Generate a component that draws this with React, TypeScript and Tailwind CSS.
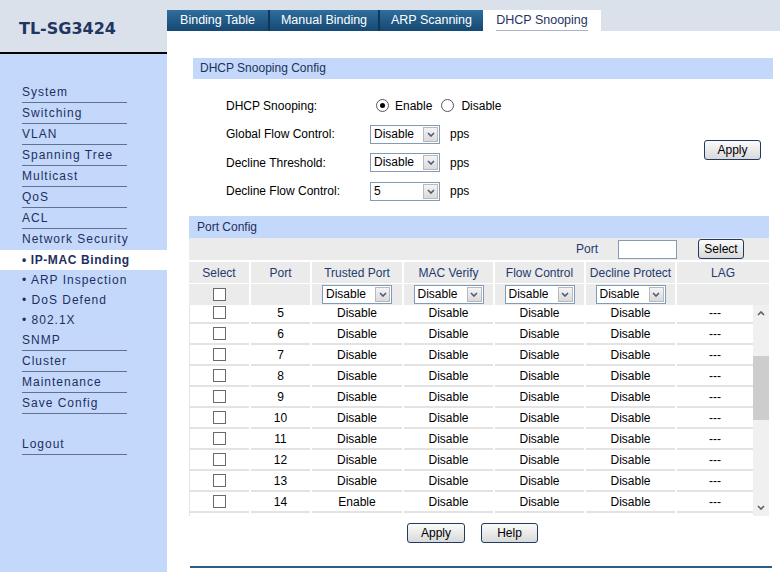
import React from "react";

const topMenu = ["System", "Switching", "VLAN", "Spanning Tree", "Multicast", "QoS", "ACL"];
const subMenu = ["ARP Inspection", "DoS Defend", "802.1X"];
const bottomMenu = ["SNMP", "Cluster", "Maintenance", "Save Config"];

const tabs = [
  { label: "Binding Table", w: "w-[101px]" },
  { label: "Manual Binding", w: "w-[110px]" },
  { label: "ARP Scanning", w: "w-[105px]" },
];

// ports 1-4 are scrolled out of view; row 15 only peeks in at the bottom
const rows = [5, 6, 7, 8, 9, 10, 11, 12, 13, 14];

const cols = "grid grid-cols-[60px_59px_90px_89px_89px_89px_1fr] gap-x-[2px]";
const cell = "flex items-center justify-center border-b-2 border-[#e3e3e3]";

const Chevron = ({ up = false, color = "#4b5b7b" }: { up?: boolean; color?: string }) => (
  <svg width="8" height="5" viewBox="0 0 8 5">
    <path d={up ? "M1 4l3-3 3 3" : "M1 1l3 3 3-3"} fill="none" stroke={color} strokeWidth="1.6" />
  </svg>
);

const Select = ({ value }: { value: string }) => (
  <div className="flex h-[19px] w-[70px] items-center border border-[#7f9db9] bg-white">
    <span className="flex-1 pl-[3px] leading-[17px]">{value}</span>
    <span className="mr-[1px] flex h-[15px] w-[15px] items-center justify-center border border-[#b9b9b9] bg-linear-to-b from-[#f4f4f4] to-[#dadada]">
      <Chevron />
    </span>
  </div>
);

const Radio = ({ checked }: { checked?: boolean }) => (
  <span className="flex h-[13px] w-[13px] items-center justify-center rounded-full border border-[#555] bg-white">
    {checked && <span className="h-[5px] w-[5px] rounded-full bg-black" />}
  </span>
);

const Checkbox = () => <span className="block h-[13px] w-[13px] border border-[#6a6a6a] bg-white" />;

const Btn = ({ children, className }: { children: React.ReactNode; className: string }) => (
  <button
    className={
      "rounded-[3px] border border-[#1f3b60] bg-linear-to-b from-[#fbfbfb] to-[#d9d9d9] text-[12px] leading-none text-black " +
      className
    }
  >
    {children}
  </button>
);

function Sidebar() {
  return (
    <aside className="flex w-[167px] shrink-0 flex-col">
      <div className="h-[52px] bg-[#dbe1ea] pl-[19px] pt-[19px] font-['DejaVu_Sans',sans-serif] text-[16px] font-bold leading-[20px] text-[#1f3660]">
        TL-SG3424
      </div>
      <div className="h-[2px] bg-black" />
      <nav className="flex-1 whitespace-nowrap bg-[#c4d8fc] pt-[28px] text-[12px] tracking-[1px] text-[#1e2f5e]">
        {topMenu.map((m) => (
          <div key={m} className="ml-[22px] h-[21px] w-[105px] border-b border-[#61718f] leading-[20px]">
            {m}
          </div>
        ))}
        <div className="ml-[22px] h-[21px] w-[105px] leading-[20px]">Network Security</div>
        <div className="h-[20px] bg-white pl-[22px] font-bold leading-[20px] tracking-[0.6px]">• IP-MAC Binding</div>
        {subMenu.map((m) => (
          <div key={m} className="h-[20px] pl-[22px] leading-[20px]">
            • {m}
          </div>
        ))}
        {bottomMenu.map((m) => (
          <div key={m} className="ml-[22px] h-[21px] w-[105px] border-b border-[#61718f] leading-[20px]">
            {m}
          </div>
        ))}
        <div className="ml-[22px] mt-[20px] h-[21px] w-[105px] border-b border-[#61718f] leading-[20px]">Logout</div>
      </nav>
    </aside>
  );
}

function Tabs() {
  return (
    <div className="flex h-[21px] shrink-0">
      {tabs.map((t, i) => (
        <div
          key={t.label}
          className={
            "flex h-full items-center justify-center bg-linear-to-b from-[#2f6e9d] to-[#154872] text-[12.5px] text-white " +
            t.w +
            (i > 0 ? " border-l-2 border-[#0f3759]" : "")
          }
        >
          {t.label}
        </div>
      ))}
      <div className="flex h-full w-[118px] justify-center bg-white text-[12.5px] text-[#1f3462]">
        <span className="flex h-full items-center border-b border-[#a9b5c4]">DHCP Snooping</span>
      </div>
    </div>
  );
}

function FormRow({ label, h, children }: { label: string; h: string; children: React.ReactNode }) {
  return (
    <div className={"flex items-center " + h}>
      <span className="w-[144px]">{label}</span>
      {children}
    </div>
  );
}

function PortConfig() {
  return (
    <section className="ml-[22px] mr-[11px] mt-[11px] flex flex-col">
      <div className="h-[22px] bg-[#c4d8fc] pl-[8px] leading-[22px] text-[#1e3058]">Port Config</div>
      <div className="flex h-[22px] items-center justify-end bg-[#ebebeb] pr-[25px] text-[#233a6e]">
        <span>Port</span>
        <span className="ml-[20px] h-[19px] w-[59px] border border-[#7f9db9] bg-white" />
        <Btn className="ml-[21px] h-[20px] w-[46px]">Select</Btn>
      </div>
      <div className={cols + " mt-[2px] h-[21px] bg-white text-[#233a6e]"}>
        {["Select", "Port", "Trusted Port", "MAC Verify", "Flow Control", "Decline Protect", "LAG"].map((h) => (
          <div key={h} className="flex items-center justify-center bg-[#ebebeb]">
            {h}
          </div>
        ))}
      </div>
      <div className={cols + " mt-[1px] h-[21px] bg-white"}>
        <div className="flex items-center justify-center bg-[#ebebeb]">
          <Checkbox />
        </div>
        <div className="bg-[#ebebeb]" />
        {[0, 1, 2, 3].map((i) => (
          <div key={i} className="flex items-center justify-center bg-[#ebebeb]">
            <Select value="Disable" />
          </div>
        ))}
        <div className="bg-[#ebebeb]" />
      </div>
      <div className="flex h-[211px] bg-white">
        <div className="min-w-0 flex-1 overflow-hidden">
          <div className="-mt-[2px]">
            {rows.map((p) => (
              <div key={p} className={cols + " h-[21px]"}>
                <div className={cell + " border-l"}>
                  <Checkbox />
                </div>
                <div className={cell}>{p}</div>
                <div className={cell}>{p === 14 ? "Enable" : "Disable"}</div>
                <div className={cell}>Disable</div>
                <div className={cell}>Disable</div>
                <div className={cell}>Disable</div>
                <div className={cell}>---</div>
              </div>
            ))}
            <div className={cols + " h-[21px]"}>
              <div className="border-l border-[#e3e3e3]" />
            </div>
          </div>
        </div>
        <div className="flex w-[16px] shrink-0 flex-col bg-[#f0f0f0]">
          <div className="flex h-[17px] items-center justify-center">
            <Chevron up color="#606060" />
          </div>
          <div className="flex-1">
            <div className="mt-[34px] h-[64px] bg-[#cdcdcd]" />
          </div>
          <div className="flex h-[17px] items-center justify-center">
            <Chevron color="#606060" />
          </div>
        </div>
      </div>
    </section>
  );
}

export default function App() {
  return (
    <div className="flex h-[572px] w-[780px] overflow-hidden font-['Liberation_Sans',Arial,sans-serif] text-[12px] text-black">
      <Sidebar />
      <main className="flex min-w-0 flex-1 flex-col bg-[#dbe1ea]">
        <div className="h-[10px] shrink-0" />
        <Tabs />
        <div className="flex flex-1 flex-col bg-white">
          <section className="ml-[26px] mr-[7px] mt-[27px]">
            <div className="h-[21px] bg-[#c4d8fc] pl-[7px] leading-[21px] text-[#1e3058]">DHCP Snooping Config</div>
            <div className="mt-[12px] flex">
              <div className="pl-[33px]">
                <FormRow label="DHCP Snooping:" h="h-[29px]">
                  <span className="ml-[6px] flex items-center">
                    <Radio checked />
                    <span className="ml-[6px]">Enable</span>
                    <span className="ml-[9px]">
                      <Radio />
                    </span>
                    <span className="ml-[7px]">Disable</span>
                  </span>
                </FormRow>
                <FormRow label="Global Flow Control:" h="h-[28px]">
                  <Select value="Disable" />
                  <span className="ml-[10px]">pps</span>
                </FormRow>
                <FormRow label="Decline Threshold:" h="h-[29px]">
                  <Select value="Disable" />
                  <span className="ml-[10px]">pps</span>
                </FormRow>
                <FormRow label="Decline Flow Control:" h="h-[28px]">
                  <Select value="5" />
                  <span className="ml-[10px]">pps</span>
                </FormRow>
              </div>
              <div className="flex flex-1 items-center justify-end pr-[12px] pt-[4px]">
                <Btn className="h-[20px] w-[57px]">Apply</Btn>
              </div>
            </div>
          </section>
          <PortConfig />
          <div className="mt-[7px] flex justify-center gap-[16px] pr-[2px]">
            <Btn className="h-[20px] w-[58px]">Apply</Btn>
            <Btn className="h-[20px] w-[57px]">Help</Btn>
          </div>
          <div className="ml-[23px] mr-[8px] mt-[23px] h-[2px] bg-[#2b5d88]" />
        </div>
      </main>
    </div>
  );
}
